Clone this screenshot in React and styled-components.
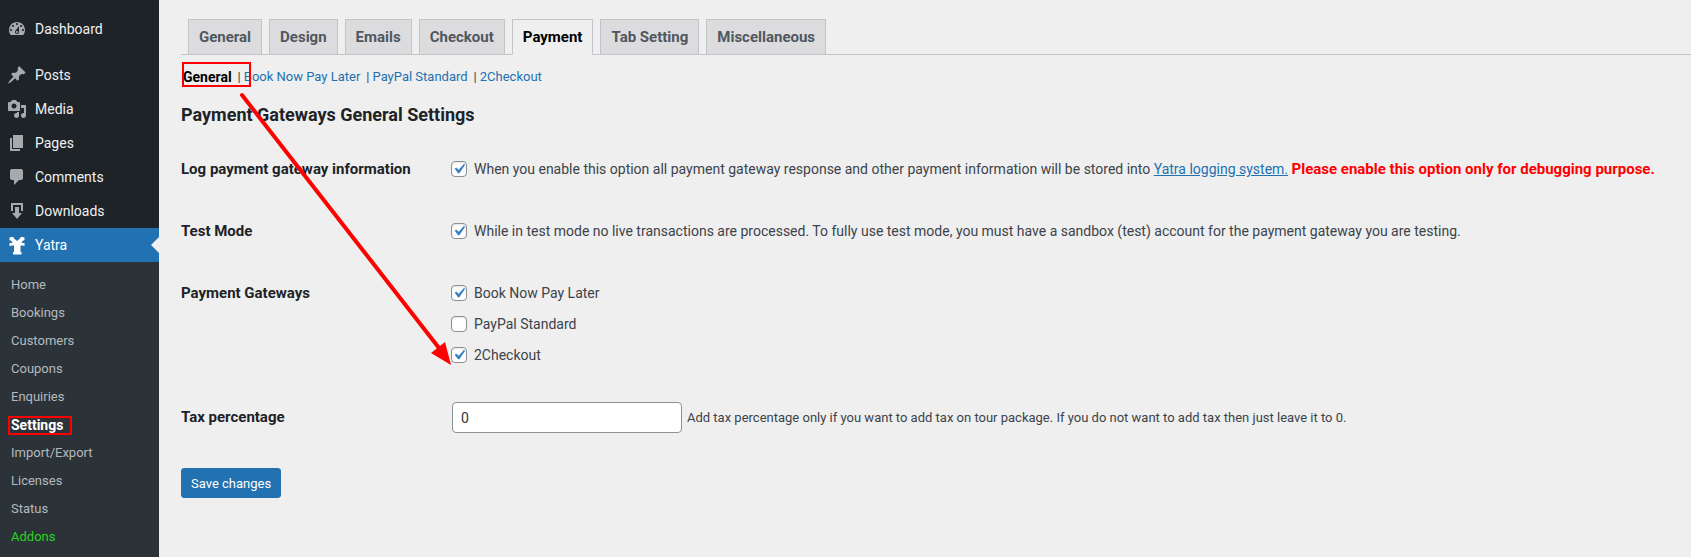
import React from "react";
import styled, { createGlobalStyle } from "styled-components";

const menu = [
  {
    label: "Dashboard",
    icon: "M3.76 16h12.48c1.1-1.37 1.76-3.11 1.76-5 0-4.42-3.58-8-8-8s-8 3.58-8 8c0 1.89.66 3.63 1.76 5zM10 4c.55 0 1 .45 1 1s-.45 1-1 1-1-.45-1-1 .45-1 1-1zM6 6c.55 0 1 .45 1 1s-.45 1-1 1-1-.45-1-1 .45-1 1-1zm8 0c.55 0 1 .45 1 1s-.45 1-1 1-1-.45-1-1 .45-1 1-1zm-5.37 5.55L12 7v6c0 1.1-.9 2-2 2s-2-.9-2-2c0-.57.24-1.08.63-1.45zM4 10c.55 0 1 .45 1 1s-.45 1-1 1-1-.45-1-1 .45-1 1-1zm12 0c.55 0 1 .45 1 1s-.45 1-1 1-1-.45-1-1 .45-1 1-1zm-5 3c0-.55-.45-1-1-1s-1 .45-1 1 .45 1 1 1 1-.45 1-1z",
  },
  {
    label: "Posts",
    separated: true,
    icon: "M10.44 3.02l1.82-1.82 6.36 6.35-1.83 1.82c-1.05-.68-2.48-.57-3.41.36l-.75.75c-.92.93-1.04 2.35-.35 3.41l-1.83 1.82-2.41-2.41-2.8 2.79c-.42.42-3.38 2.71-3.8 2.29s1.86-3.39 2.28-3.81l2.79-2.79L4.1 9.36l1.83-1.82c1.05.69 2.48.57 3.4-.36l.75-.75c.93-.92 1.05-2.35.36-3.41z",
  },
  {
    label: "Media",
    icon: "M13 11V4c0-.55-.45-1-1-1h-1.67L9 1H5L3.67 3H2c-.55 0-1 .45-1 1v7c0 .55.45 1 1 1h10c.55 0 1-.45 1-1zM7 4.5c1.38 0 2.5 1.12 2.5 2.5S8.38 9.5 7 9.5 4.5 8.38 4.5 7 5.62 4.5 7 4.5zM14 6h5v10.5c0 1.38-1.12 2.5-2.5 2.5S14 17.88 14 16.5s1.12-2.5 2.5-2.5c.17 0 .34.02.5.05V9h-3V6zm-4 8.05V13h2v3.5c0 1.38-1.12 2.5-2.5 2.5S7 17.88 7 16.5 8.12 14 9.5 14c.17 0 .34.02.5.05z",
  },
  { label: "Pages", icon: "M6 15V2h10v13H6zm-1 1h8v2H3V5h2v11z" },
  {
    label: "Comments",
    icon: "M5 2h9c1.1 0 2 .9 2 2v7c0 1.1-.9 2-2 2h-2l-5 5v-5H5c-1.1 0-2-.9-2-2V4c0-1.1.9-2 2-2z",
  },
  {
    label: "Downloads",
    icon: "M14.01 4v6h2V2H4v8h2.01V4h8zm-2 2v6h3l-5 6-5-6h3V6h4z",
  },
  {
    label: "Yatra",
    current: true,
    icon: "M2.5 2.5h1V2h3v1L10 6l3.5-3V2h3v.5h1V5l-2 1-1 2h3v3h-1v-.5h-3V17h1v2.5H6V17h1v-6.5H4v.5H2.5V8h3l-1-2-2-1z",
  },
];

const submenu = [
  "Home",
  "Bookings",
  "Customers",
  "Coupons",
  "Enquiries",
  "Settings",
  "Import/Export",
  "Licenses",
  "Status",
  "Addons",
];

const tabs = [
  "General",
  "Design",
  "Emails",
  "Checkout",
  "Payment",
  "Tab Setting",
  "Miscellaneous",
];

const sections = ["General", "Book Now Pay Later", "PayPal Standard", "2Checkout"];

function Checkbox({ id, defaultChecked, children }) {
  return (
    <CheckRow>
      <CheckBox>
        <input type="checkbox" id={id} defaultChecked={defaultChecked} />
        <svg viewBox="0 0 20 20" aria-hidden="true">
          <path d="M14.83 4.89l1.34.94-5.81 8.38H9.02L5.78 9.67l1.34-1.25 2.57 2.4z" />
        </svg>
      </CheckBox>
      <label htmlFor={id}>{children}</label>
    </CheckRow>
  );
}

function App() {
  return (
    <Container>
      <GlobalStyle />
      <Sidebar>
        {menu.map((item) => (
          <MenuItem
            key={item.label}
            href="#"
            $current={item.current}
            $separated={item.separated}
          >
            <svg viewBox="0 0 20 20" aria-hidden="true">
              <path d={item.icon} />
            </svg>
            {item.label}
          </MenuItem>
        ))}
        <Submenu>
          {submenu.map((label) => (
            <SubmenuItem
              key={label}
              href="#"
              $current={label === "Settings"}
              $green={label === "Addons"}
            >
              {label}
              {label === "Settings" && <SettingsMark />}
            </SubmenuItem>
          ))}
        </Submenu>
      </Sidebar>

      <Main>
        <Tabs>
          {tabs.map((label) => (
            <Tab key={label} href="#" $active={label === "Payment"}>
              {label}
            </Tab>
          ))}
        </Tabs>

        <Sections>
          {sections.map((label, i) => (
            <React.Fragment key={label}>
              {i > 0 && <Divider>|</Divider>}
              <SectionLink href="#" $current={i === 0}>
                {label}
              </SectionLink>
            </React.Fragment>
          ))}
          <SectionMark />
        </Sections>

        <Title>Payment Gateways General Settings</Title>

        <form>
          <Row>
            <RowTitle>Log payment gateway information</RowTitle>
            <div>
              <Checkbox id="log" defaultChecked>
                When you enable this option all payment gateway response and
                other payment information will be stored into{" "}
                <a href="#">Yatra logging system.</a>{" "}
                <Warning>
                  Please enable this option only for debugging purpose.
                </Warning>
              </Checkbox>
            </div>
          </Row>
          <Row>
            <RowTitle>Test Mode</RowTitle>
            <div>
              <Checkbox id="test-mode" defaultChecked>
                While in test mode no live transactions are processed. To fully
                use test mode, you must have a sandbox (test) account for the
                payment gateway you are testing.
              </Checkbox>
            </div>
          </Row>
          <Row>
            <RowTitle>Payment Gateways</RowTitle>
            <div>
              <Checkbox id="book-now" defaultChecked>
                Book Now Pay Later
              </Checkbox>
              <Checkbox id="paypal">PayPal Standard</Checkbox>
              <Checkbox id="2checkout" defaultChecked>
                2Checkout
              </Checkbox>
            </div>
          </Row>
          <Row>
            <RowTitle as="label" htmlFor="tax">
              Tax percentage
            </RowTitle>
            <Field>
              <input type="text" id="tax" defaultValue="0" />
              <span>
                Add tax percentage only if you want to add tax on tour package.
                If you do not want to add tax then just leave it to 0.
              </span>
            </Field>
          </Row>
          <SaveButton type="button">Save changes</SaveButton>
        </form>

        <Arrow viewBox="0 0 214 276" aria-hidden="true">
          <path d="M4 5L201 258" />
          <polygon points="213,275 193,263 207,252" />
        </Arrow>
      </Main>
    </Container>
  );
}

const GlobalStyle = createGlobalStyle`
  * {
    box-sizing: border-box;
  }

  body {
    margin: 0;
    background-color: #efefef;
    color: #3c434a;
    font-family: Roboto, "Open Sans", sans-serif;
    font-size: 14px;
  }

  a {
    color: #2271b1;
  }
`;

const Container = styled.div`
  display: flex;
  min-height: 100vh;
`;

const Sidebar = styled.nav`
  width: 159px;
  flex-shrink: 0;
  display: flex;
  flex-direction: column;
  padding-top: 12px;
  background-color: #1d2327;
`;

const MenuItem = styled.a`
  position: relative;
  display: flex;
  align-items: center;
  gap: 8px;
  height: 34px;
  margin-top: ${(props) => (props.$separated ? "12px" : "0")};
  padding-left: 7px;
  background-color: ${(props) => (props.$current ? "#2271b1" : "transparent")};
  color: ${(props) => (props.$current ? "#fff" : "#f0f0f1")};
  text-decoration: none;

  & > svg {
    width: 20px;
    height: 20px;
    fill: ${(props) => (props.$current ? "#fff" : "#a7aaad")};
  }

  &::after {
    content: "";
    display: ${(props) => (props.$current ? "block" : "none")};
    position: absolute;
    right: 0;
    top: 9px;
    border: 8px solid transparent;
    border-left-width: 0;
    border-right-color: #efefef;
  }
`;

const Submenu = styled.div`
  flex: 1;
  padding: 9px 0 6px;
  background-color: #2c3338;
`;

const SubmenuItem = styled.a`
  position: relative;
  display: block;
  padding-left: 11px;
  color: ${(props) =>
    props.$current ? "#fff" : props.$green ? "#27d321" : "#b4b9be"};
  font-size: ${(props) => (props.$current ? "14px" : "13px")};
  font-weight: ${(props) => (props.$current ? 700 : 400)};
  line-height: 28px;
  text-decoration: none;
`;

const Mark = styled.span`
  position: absolute;
  border: 2px solid #f00;
  pointer-events: none;
`;

const SettingsMark = styled(Mark)`
  left: 8px;
  top: 5px;
  width: 64px;
  height: 19px;
`;

const SectionMark = styled(Mark)`
  left: 1px;
  top: 7px;
  width: 69px;
  height: 25px;
`;

const Main = styled.main`
  position: relative;
  flex: 1;
  min-width: 0;
  padding: 19px 0 40px 22px;
`;

const Tabs = styled.nav`
  display: flex;
  gap: 7px;
  padding-left: 7px;
  border-bottom: 1px solid #c3c4c7;
`;

const Tab = styled.a`
  margin-bottom: -1px;
  padding: 6px 10px 5px;
  border: 1px solid #c3c4c7;
  border-bottom-color: ${(props) => (props.$active ? "#efefef" : "#c3c4c7")};
  background-color: ${(props) => (props.$active ? "#efefef" : "#dcdcde")};
  color: ${(props) => (props.$active ? "#000" : "#50575e")};
  font-size: 15px;
  font-weight: 700;
  line-height: 23px;
  text-decoration: none;
`;

const Sections = styled.div`
  position: relative;
  display: flex;
  gap: 3px;
  padding: 12px 0 0 2px;
  font-size: 13px;
  line-height: 20px;
`;

const SectionLink = styled.a`
  color: ${(props) => (props.$current ? "#000" : "#2271b1")};
  font-size: ${(props) => (props.$current ? "14px" : "13px")};
  font-weight: ${(props) => (props.$current ? 700 : 400)};
  text-decoration: none;
`;

const Divider = styled.span`
  margin-left: 3px;
`;

const Title = styled.h2`
  margin: 17px 0 12px;
  color: #1d2327;
  font-size: 18px;
  font-weight: 700;
  line-height: 22px;
`;

const Row = styled.div`
  display: grid;
  grid-template-columns: 270px 1fr;
  padding: 16px 0 15px;
`;

const RowTitle = styled.div`
  color: #1d2327;
  font-size: 15px;
  font-weight: 700;
  line-height: 31px;
`;

const CheckRow = styled.div`
  display: flex;
  gap: 7px;
  line-height: 31px;
`;

const CheckBox = styled.span`
  display: grid;
  flex-shrink: 0;
  height: 30px;
  align-content: center;

  & > input {
    grid-area: 1 / 1;
    appearance: none;
    width: 16px;
    height: 16px;
    margin: 0;
    border: 1px solid #8c8f94;
    border-radius: 4px;
    background-color: #fff;
    box-shadow: inset 0 1px 2px rgba(0, 0, 0, 0.1);
  }

  & > svg {
    grid-area: 1 / 1;
    width: 20px;
    height: 20px;
    margin: -2px;
    fill: #3582c4;
    pointer-events: none;
    visibility: hidden;
  }

  & > input:checked + svg {
    visibility: visible;
  }
`;

const Warning = styled.strong`
  color: #f00;
  font-size: 15px;
`;

const Field = styled.div`
  display: flex;
  align-items: center;
  gap: 5px;
  padding-left: 1px;
  font-size: 13px;

  & > input {
    width: 230px;
    height: 31px;
    padding: 0 8px;
    border: 1px solid #8c8f94;
    border-radius: 4px;
    background-color: #fff;
    color: #2c3338;
    font-family: inherit;
    font-size: 14px;
  }
`;

const SaveButton = styled.button`
  height: 30px;
  margin-top: 20px;
  padding: 0 9px;
  border: 1px solid #2271b1;
  border-radius: 3px;
  background-color: #2271b1;
  color: #fff;
  font-family: inherit;
  font-size: 13px;
`;

/* runs from the General section down to the 2Checkout box */
const Arrow = styled.svg`
  position: absolute;
  left: 79px;
  top: 90px;
  width: 214px;
  height: 276px;
  pointer-events: none;

  & > path {
    stroke: #f00;
    stroke-width: 4px;
    stroke-linecap: round;
  }

  & > polygon {
    fill: #f00;
  }
`;

export default App;
